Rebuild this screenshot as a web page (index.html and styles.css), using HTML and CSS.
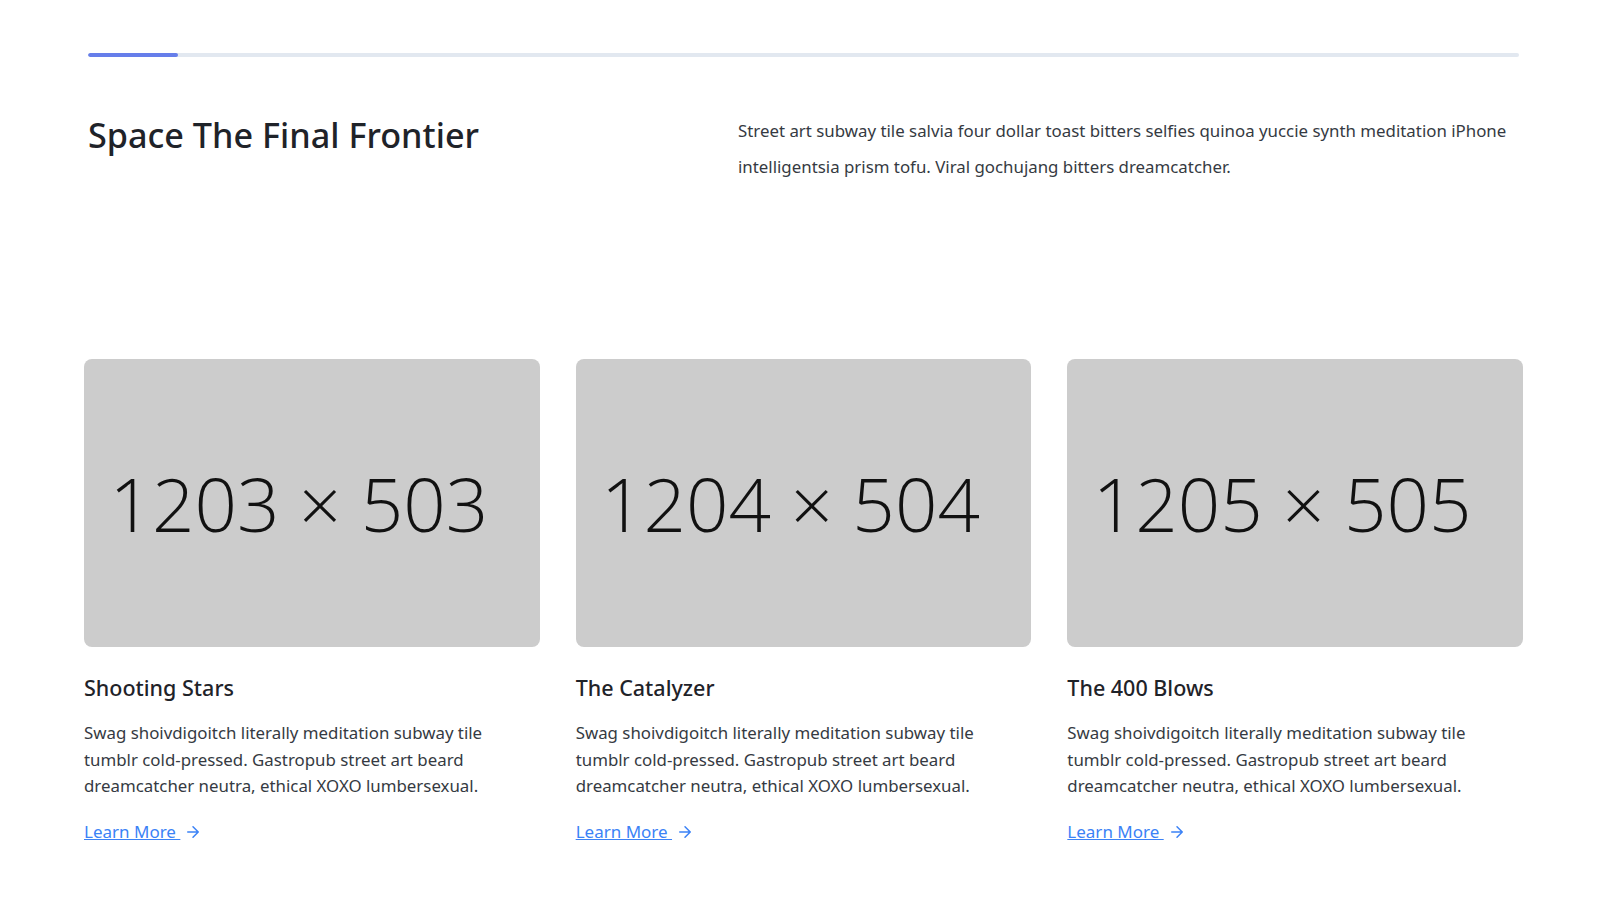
FILE: index.html
```html
<!DOCTYPE html>
<html lang="en">
<head>
<meta charset="utf-8">
<title>Space The Final Frontier</title>
<link rel="stylesheet" href="styles.css">
</head>
<body>
<section class="page">
  <div class="progress"><div class="progress-fill"></div></div>
  <div class="intro">
    <h1 class="intro-title">Space The Final Frontier</h1>
    <p class="intro-text">Street art subway tile salvia four dollar toast bitters selfies quinoa yuccie synth meditation iPhone intelligentsia prism tofu. Viral gochujang bitters dreamcatcher.</p>
  </div>
  <div class="cards">
    <article class="card">
      <div class="card-img"><span>1203 × 503</span></div>
      <h2 class="card-title">Shooting Stars</h2>
      <p class="card-text">Swag shoivdigoitch literally meditation subway tile tumblr cold-pressed. Gastropub street art beard dreamcatcher neutra, ethical XOXO lumbersexual.</p>
      <a class="card-link" href="#">Learn More <svg class="arrow" viewBox="0 0 24 24" fill="none" stroke="currentColor" stroke-width="2" stroke-linecap="round" stroke-linejoin="round"><path d="M5 12h14M12 5l7 7-7 7"/></svg></a>
    </article>
    <article class="card">
      <div class="card-img"><span>1204 × 504</span></div>
      <h2 class="card-title">The Catalyzer</h2>
      <p class="card-text">Swag shoivdigoitch literally meditation subway tile tumblr cold-pressed. Gastropub street art beard dreamcatcher neutra, ethical XOXO lumbersexual.</p>
      <a class="card-link" href="#">Learn More <svg class="arrow" viewBox="0 0 24 24" fill="none" stroke="currentColor" stroke-width="2" stroke-linecap="round" stroke-linejoin="round"><path d="M5 12h14M12 5l7 7-7 7"/></svg></a>
    </article>
    <article class="card">
      <div class="card-img"><span>1205 × 505</span></div>
      <h2 class="card-title">The 400 Blows</h2>
      <p class="card-text">Swag shoivdigoitch literally meditation subway tile tumblr cold-pressed. Gastropub street art beard dreamcatcher neutra, ethical XOXO lumbersexual.</p>
      <a class="card-link" href="#">Learn More <svg class="arrow" viewBox="0 0 24 24" fill="none" stroke="currentColor" stroke-width="2" stroke-linecap="round" stroke-linejoin="round"><path d="M5 12h14M12 5l7 7-7 7"/></svg></a>
    </article>
  </div>
</section>
</body>
</html>
```
FILE: styles.css
```css
* { box-sizing: border-box; }
html, body { margin: 0; padding: 0; background: #ffffff; }
body {
  font-family: "Noto Sans", "Open Sans", sans-serif;
  color: #353a42;
}
.page {
  padding: 53px 79px 40px 84px;
}
.progress {
  height: 4px;
  margin: 0 4px;
  background: #e2e8f0;
  border-radius: 3px;
  overflow: hidden;
}
.progress-fill {
  width: 90px;
  height: 100%;
  background: #667eea;
  border-radius: 3px;
}
.intro {
  display: flex;
  margin: 56px 4px 0 4px;
}
.intro-title {
  width: 650px;
  flex: none;
  margin: 0;
  font-size: 34.2px;
  line-height: 44px;
  font-weight: 500;
  color: #1f2329;
}
.intro-text {
  flex: 1;
  margin: 0;
  font-size: 16.85px;
  line-height: 36px;
  color: #353a42;
}
.cards {
  display: grid;
  grid-template-columns: repeat(3, 1fr);
  column-gap: 36px;
  margin-top: 174px;
}
.card-img {
  height: 288px;
  border-radius: 8px;
  background: #cccccc;
  display: flex;
  align-items: center;
  justify-content: center;
  padding-right: 26px;
  overflow: hidden;
}
.card-img span {
  font-family: "Open Sans", "Noto Sans", sans-serif;
  font-weight: 300;
  font-size: 74.5px;
  color: #111111;
  white-space: nowrap;
}
.card-title {
  margin: 25px 0 0;
  font-size: 21.5px;
  line-height: 32px;
  font-weight: 500;
  color: #1f2329;
}
.card-text {
  margin: 16px 0 0;
  padding-right: 30px;
  font-size: 16.85px;
  line-height: 26.67px;
  color: #353a42;
}
.card-link {
  display: inline-flex;
  align-items: center;
  margin-top: 19px;
  font-size: 17px;
  line-height: 26.67px;
  color: #3b82f6;
  text-decoration: underline;
  white-space: pre;
}
.arrow {
  width: 18px;
  height: 18px;
  margin-left: 4px;
}
```
